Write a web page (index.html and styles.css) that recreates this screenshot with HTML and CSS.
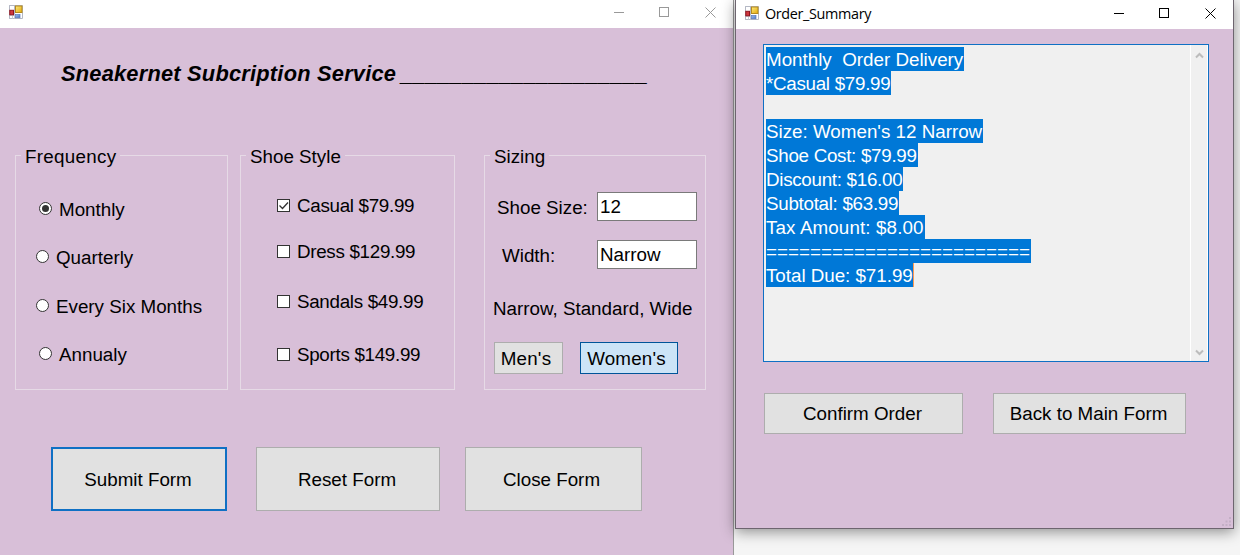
FILE: index.html
```html
<!DOCTYPE html>
<html lang="en">
<head>
<meta charset="utf-8">
<title>Sneakernet Subcription Service</title>
<link rel="stylesheet" href="styles.css">
</head>
<body>
<svg class="defs" width="0" height="0" aria-hidden="true">
  <defs>
    <linearGradient id="gold" x1="0" y1="0" x2="1" y2="1"><stop offset="0" stop-color="#fdeb80"/><stop offset="1" stop-color="#e3a808"/></linearGradient>
    <linearGradient id="blue" x1="0" y1="0" x2="1" y2="1"><stop offset="0" stop-color="#9dbcf0"/><stop offset="1" stop-color="#4a76c4"/></linearGradient>
    <symbol id="form-icon" viewBox="0 0 14 14">
      <path d="M0.5 .5h5v13h-5zM.5 .5h13v13H.5z" fill="#fff" stroke="#b4b8c4"/>
      <path d="M5.500 9v4.500M1 10.500h4M3.500 10.500v3" stroke="#c8ccd6" fill="none"/>
      <rect x="6.500" y="1" width="6.500" height="6.500" fill="url(#gold)" stroke="#b58a1c"/>
      <rect x=".8" y="5.300" width="3.700" height="4.500" fill="#d0363c" stroke="#8e1420"/>
      <rect x="6.300" y="9.500" width="4.700" height="3.300" fill="url(#blue)" stroke="#5b78b8" stroke-width=".7"/>
    </symbol>
  </defs>
</svg>

<main class="desktop">
  <section class="window main-window">
    <header class="titlebar">
      <svg class="app-icon"><use href="#form-icon"/></svg>
      <div class="controls">
        <svg width="11" height="11"><path d="M1 5.500h10"/></svg>
        <svg width="11" height="11"><rect x=".5" y=".5" width="9" height="9"/></svg>
        <svg width="11" height="11"><path d="M.5 .5l10 10M10.500 .5l-10 10"/></svg>
      </div>
    </header>
    <h1 class="heading"><span>Sneakernet Subcription Service</span><span class="rule">____________________</span></h1>
    <div class="groups">
      <section class="group frequency">
        <h2 class="legend">Frequency</h2>
        <div class="options">
          <label class="option indent"><svg class="mark"><circle cx="6.500" cy="6.500" r="6"/><circle class="dot" cx="6.500" cy="6.500" r="3.500"/></svg>Monthly</label>
          <label class="option"><svg class="mark"><circle cx="6.500" cy="6.500" r="6"/></svg>Quarterly</label>
          <label class="option"><svg class="mark"><circle cx="6.500" cy="6.500" r="6"/></svg>Every Six Months</label>
          <label class="option indent"><svg class="mark"><circle cx="6.500" cy="6.500" r="6"/></svg>Annualy</label>
        </div>
      </section>
      <section class="group style">
        <h2 class="legend">Shoe Style</h2>
        <div class="options">
          <label class="option"><svg class="mark"><rect x=".5" y=".5" width="12" height="12"/><path d="M2.500 6.500l3 3 5.500-6"/></svg>Casual $79.99</label>
          <label class="option"><svg class="mark"><rect x=".5" y=".5" width="12" height="12"/></svg>Dress $129.99</label>
          <label class="option"><svg class="mark"><rect x=".5" y=".5" width="12" height="12"/></svg>Sandals $49.99</label>
          <label class="option"><svg class="mark"><rect x=".5" y=".5" width="12" height="12"/></svg>Sports $149.99</label>
        </div>
      </section>
      <section class="group sizing">
        <h2 class="legend">Sizing</h2>
        <div class="field"><span class="size-label">Shoe Size:</span><div class="input">12</div></div>
        <div class="field"><span class="width-label">Width:</span><div class="input">Narrow</div></div>
        <p class="hint">Narrow, Standard, Wide</p>
        <div class="fit"><div class="button mens">Men's</div><div class="button womens">Women's</div></div>
      </section>
    </div>
    <div class="actions">
      <div class="button submit">Submit Form</div>
      <div class="button reset">Reset Form</div>
      <div class="button close">Close Form</div>
    </div>
  </section>

  <section class="window order-window">
    <header class="titlebar">
      <svg class="app-icon"><use href="#form-icon"/></svg>
      <span class="title">Order_Summary</span>
      <div class="controls">
        <svg width="11" height="11"><path d="M1 5.500h10"/></svg>
        <svg width="11" height="11"><rect x=".5" y=".5" width="9" height="9"/></svg>
        <svg width="11" height="11"><path d="M.5 .5l10 10M10.500 .5l-10 10"/></svg>
      </div>
    </header>
    <div class="summary">
      <div class="lines">
        <div><span>Monthly&nbsp; Order Delivery</span></div>
        <div><span class="tight">*Casual $79.99</span></div>
        <div></div>
        <div><span>Size: Women's 12 Narrow</span></div>
        <div><span class="tight">Shoe Cost: $79.99</span></div>
        <div><span class="tight">Discount: $16.00</span></div>
        <div><span class="tight">Subtotal: $63.99</span></div>
        <div><span class="loose">Tax Amount: $8.00</span></div>
        <div><span class="divider">========================</span></div>
        <div><span class="caret">Total Due: $71.99</span></div>
      </div>
      <div class="scrollbar">
        <svg width="9" height="7"><path d="M1 5.500L4.500 2 8 5.500"/></svg>
        <svg width="9" height="7"><path d="M1 1.500L4.500 5 8 1.500"/></svg>
      </div>
    </div>
    <div class="order-actions">
      <div class="button confirm">Confirm Order</div>
      <div class="button back">Back to Main Form</div>
    </div>
    <svg class="grip" width="10" height="10"><path d="M7 0h2v2h-2zM7 3.500h2v2h-2zM3.500 3.500h2v2h-2zM7 7h2v2h-2zM3.500 7h2v2h-2zM0 7h2v2h-2z"/></svg>
  </section>
</main>
</body>
</html>
```
FILE: styles.css
```css
* { box-sizing: border-box; }
body { margin: 0; overflow: hidden; }
.defs { position: absolute; }
.desktop {
  position: relative;
  width: 1240px;
  height: 555px;
  overflow: hidden;
  background: #f5f5f5;
  font: 18.8px/20px "Liberation Sans", Arial, sans-serif;
  color: #000;
}
.window { position: absolute; top: 0; background: #d8bfd8; }
.main-window { left: 0; width: 734px; height: 555px; border-right: 1px solid #999; }
.order-window {
  left: 735px;
  width: 499px;
  height: 529px;
  border: 1px solid #6d656f;
  border-top: 0;
  box-shadow: 0 3px 13px rgba(0, 0, 0, .42);
}

.titlebar { display: flex; align-items: center; height: 28px; background: #fff; }
.main-window .titlebar { padding: 0 17px 4px 9px; }
.order-window .titlebar { height: 29px; padding: 0 17px 3px 9px; }
.app-icon { width: 14px; height: 14px; }
.title { margin-left: 6px; font: 14.4px/20px "Open Sans", "Noto Sans", sans-serif; letter-spacing: -.35px; padding-top: 1px; }
.controls { display: flex; gap: 35px; margin-left: auto; }
.controls svg { fill: none; stroke: #999; }
.order-window .controls svg { stroke: #000; }

.heading {
  display: flex;
  gap: 5px;
  margin: 36px 0 0 61px;
  font: italic bold 21.8px/20px "Liberation Sans", Arial, sans-serif;
  letter-spacing: .23px;
  white-space: nowrap;
}
.rule { font-weight: normal; }

.groups { display: flex; align-items: flex-start; margin: 71px 0 0 15px; }
.group { height: 235px; border: 1px solid #e6dae6; }
.frequency { width: 213px; }
.style { width: 215px; margin-left: 12px; }
.sizing { width: 222px; margin-left: 29px; }
.legend {
  width: fit-content;
  height: 20px;
  margin: -10px 0 0 5px;
  padding: 0 4px;
  background: #d8bfd8;
  font: inherit;
  line-height: 22px;
  white-space: nowrap;
}
.frequency .legend { letter-spacing: .3px; }
.options { display: flex; flex-direction: column; }
.option { display: flex; align-items: center; gap: 7px; height: 20px; white-space: nowrap; }
.mark { width: 13px; height: 13px; margin-bottom: 1px; flex: none; fill: #fff; stroke: #333; }
.mark .dot { fill: #333; stroke: none; }
.mark path { fill: none; stroke-width: 1.300; }
.frequency .options { gap: 28.3px; padding: 34px 0 0 20px; }
.frequency .indent { margin-left: 3px; }
.frequency .mark { margin-bottom: 3px; }
.style .options { padding: 30px 0 0 36px; letter-spacing: -.3px; }
.style .option:nth-child(2) { margin-top: 26px; }
.style .option:nth-child(3) { margin-top: 30px; }
.style .option:nth-child(4) { margin-top: 33px; }

.field { display: flex; justify-content: space-between; align-items: center; height: 29px; padding: 0 8px 0 12px; white-space: nowrap; }
.legend + .field { margin-top: 26px; }
.field + .field { margin-top: 19px; }
.field span { padding-top: 2px; }
.width-label { margin-left: 5px; }
.input { width: 100px; height: 29px; padding: 4px 2px; border: 1px solid #7a7a7a; background: #fff; }
.hint { margin: 30px 0 0 8px; white-space: nowrap; }
.fit { display: flex; gap: 17px; margin: 23px 0 0 9px; }

.button { display: flex; align-items: center; justify-content: center; border: 1px solid #adadad; background: #e1e1e1; white-space: nowrap; }
.mens { width: 69px; height: 32px; padding: 2px 5px 0 0; letter-spacing: .2px; }
.womens { width: 98px; height: 32px; padding: 2px 5px 0 0; letter-spacing: .2px; border-color: #005499; background: #cce4f7; }
.actions { display: flex; margin: 57px 0 0 51px; }
.actions .button { height: 64px; padding-top: 2px; }
.submit { width: 176px; border: 2px solid #0f70c4; padding-right: 2px; }
.reset { width: 184px; margin-left: 29px; padding-right: 2px; }
.close { width: 177px; margin-left: 25px; padding-right: 4px; }

.summary { display: flex; width: 446px; height: 318px; margin: 15px 0 0 27px; border: 1px solid #0f70c4; background: #f0f0f0; }
.lines { flex: 1; padding: 2px 0 0 2px; line-height: 26px; color: #fff; white-space: nowrap; }
.lines div { height: 24px; }
.lines span { display: block; width: fit-content; height: 24px; padding-right: 1px; background: #0078d7; }
.lines .tight { letter-spacing: -.29px; }
.lines .loose { letter-spacing: .12px; }
.lines .divider { letter-spacing: .03px; }
.lines .caret { padding: 0; letter-spacing: -.03px; border-right: 1px solid #ff9a50; }
.scrollbar { display: flex; flex-direction: column; align-items: center; justify-content: space-between; width: 18px; padding: 7px 0 5px 0; border-left: 1px solid #fff; border-right: 1px solid #fff; }
.scrollbar svg { fill: none; stroke: #bcbcbc; stroke-width: 2; }
.order-actions { display: flex; gap: 30px; margin: 31px 0 0 28px; }
.order-actions .button { height: 41px; }
.confirm { width: 199px; padding-right: 2px; }
.back { width: 193px; padding-right: 2px; }
.grip { position: absolute; right: 1px; bottom: 1px; fill: #c4afc6; }
```
